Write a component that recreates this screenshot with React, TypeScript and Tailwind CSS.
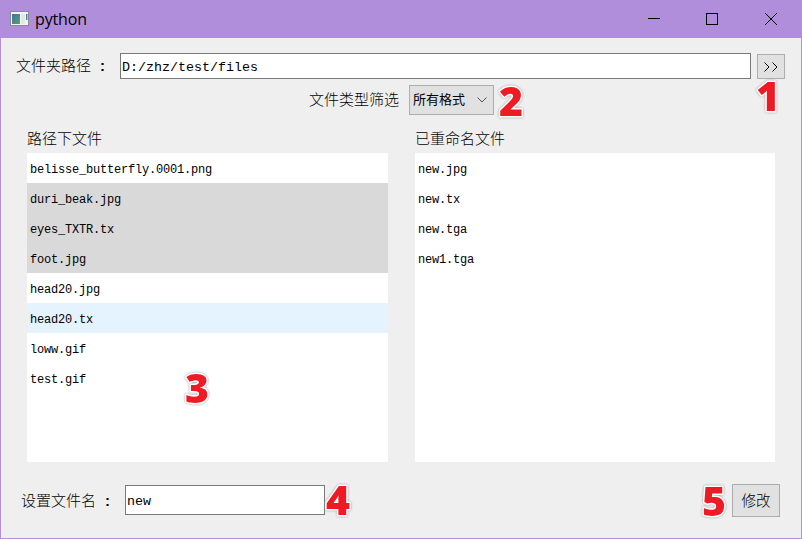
import React from 'react';

const cjk = "font-['Liberation_Sans','Noto_Sans_CJK_SC',sans-serif]";
const mono = "font-['Liberation_Mono','Noto_Sans_CJK_SC',monospace]";

const files = [
  { name: 'belisse_butterfly.0001.png', tone: '' },
  { name: 'duri_beak.jpg', tone: 'bg-[#d9d9d9]' },
  { name: 'eyes_TXTR.tx', tone: 'bg-[#d9d9d9]' },
  { name: 'foot.jpg', tone: 'bg-[#d9d9d9]' },
  { name: 'head20.jpg', tone: '' },
  { name: 'head20.tx', tone: 'bg-[#e5f3ff]' },
  { name: 'loww.gif', tone: '' },
  { name: 'test.gif', tone: '' },
];

const renamed = ['new.jpg', 'new.tx', 'new.tga', 'new1.tga'];

function Marker({ value, place }: { value: string; place: string }) {
  return (
    <svg className={`pointer-events-none absolute h-[72px] w-12 ${place}`} viewBox="0 0 48 72">
      <text
        x="24"
        y="51"
        fontFamily="Open Sans, Noto Sans, sans-serif"
        fontWeight="800"
        fontSize="41"
        textAnchor="middle"
        strokeLinejoin="round"
        fill="#ed1c24"
        stroke="#ffffff"
        strokeWidth="3"
        paintOrder="stroke"
        style={{ filter: 'drop-shadow(0 0 1px #999)' }}
      >
        {value}
      </text>
    </svg>
  );
}

function FileRow({ name, tone }: { name: string; tone: string }) {
  return (
    <li className={`flex h-[30px] items-center pl-[3px] pt-[3px] text-[12px] tracking-[-0.2px] ${mono} ${tone}`}>
      {name}
    </li>
  );
}

export default function App() {
  return (
    <div className={`relative flex h-[539px] w-[802px] flex-col overflow-hidden border border-[#b18fda] bg-[#efefef] text-[15px] leading-5 text-black ${cjk}`}>
      <header className="flex h-[37px] shrink-0 items-center bg-[#b08edb] pl-[9px]">
        <svg className="mb-px" width="19" height="16" viewBox="0 0 19 16">
          <defs>
            <linearGradient id="pane" x1="0" y1="0" x2="1" y2="1">
              <stop offset="0" stopColor="#3c73a8" />
              <stop offset="1" stopColor="#5aa36c" />
            </linearGradient>
          </defs>
          <rect x="0.5" y="0.5" width="18" height="14" fill="#f3f4f4" stroke="#8b8795" />
          <rect x="2" y="3" width="8" height="10" fill="url(#pane)" />
          <rect x="11" y="3" width="4" height="10" fill="#e4e6e8" />
          <rect x="16" y="3" width="1.5" height="6" fill="url(#pane)" />
        </svg>
        <span className="mb-px ml-[6px] font-['Open_Sans','Noto_Sans',sans-serif] text-[16px] tracking-[-0.15px]">python</span>
        <svg className="mb-px ml-auto mr-[23px]" width="132" height="16" viewBox="0 0 132 16" fill="none" stroke="#000" shapeRendering="crispEdges">
          <path d="M2 7.5h12" />
          <rect x="60.5" y="2.5" width="11" height="11" />
          <path d="M119 2l12 12M131 2l-12 12" shapeRendering="auto" />
        </svg>
      </header>

      <div className="flex h-[47px] shrink-0 items-start pl-[15px] pr-4 pt-[15px]">
        <span className="w-[104px] whitespace-pre pt-[3px] font-light">文件夹路径<span className="ml-[9px] font-bold">:</span></span>
        <div className={`flex h-[26px] w-[631px] items-center border border-[#7a7a7a] bg-white pl-px pt-[3px] text-[13.33px] ${mono}`}>
          D:/zhz/test/files
        </div>
        <button className="ml-[6px] mt-px flex h-[25px] w-7 items-center justify-center border border-[#adadad] bg-[#e1e1e1]">
          <svg width="14" height="10" viewBox="0 0 14 10" fill="none" stroke="#000">
            <path d="M0.5 0.5L5 5L0.5 9.5M8.5 0.5L13 5L8.5 9.5" />
          </svg>
        </button>
      </div>

      <div className="flex h-[30px] shrink-0 items-center pl-[308px]">
        <span className="w-[100px] font-light">文件类型筛选</span>
        <button className="flex h-[30px] w-[85px] items-center border border-[#adadad] bg-[#e1e1e1] pl-[3px] text-[13px]">
          所有格式
          <svg className="ml-auto mr-[6px]" width="10" height="6" viewBox="0 0 10 6" fill="none" stroke="#555">
            <path d="M0.5 0.5L5 5L9.5 0.5" />
          </svg>
        </button>
      </div>

      <main className="grid h-[347px] shrink-0 grid-cols-[361px_360px] gap-[27px] pl-[26px] pt-[14px]">
        <section>
          <h2 className="h-6 font-light">路径下文件</h2>
          <ul className="h-[309px] bg-white">
            {files.map((f) => <FileRow key={f.name} name={f.name} tone={f.tone} />)}
          </ul>
        </section>
        <section>
          <h2 className="h-6 font-light">已重命名文件</h2>
          <ul className="h-[309px] bg-white">
            {renamed.map((n) => <FileRow key={n} name={n} tone="" />)}
          </ul>
        </section>
      </main>

      <footer className="flex h-[76px] shrink-0 items-start pl-5 pr-[21px] pt-[22px]">
        <span className="mt-[7px] w-[104px] font-light">设置文件名<span className="ml-[9px] font-bold">:</span></span>
        <div className={`mt-px flex h-[30px] w-[200px] items-center border border-[#7a7a7a] bg-white pl-px pt-[3px] text-[13.33px] ${mono}`}>
          new
        </div>
        <button className="ml-auto flex h-[33px] w-12 items-center justify-center border border-[#adadad] bg-[#e1e1e1] text-[14.5px] font-light">修改</button>
      </footer>

      <Marker value="1" place="left-[743px] top-[59px]" />
      <Marker value="2" place="left-[486px] top-[64px]" />
      <Marker value="3" place="left-[172px] top-[351px]" />
      <Marker value="4" place="left-[313px] top-[463px]" />
      <Marker value="5" place="left-[689px] top-[464px]" />
    </div>
  );
}
